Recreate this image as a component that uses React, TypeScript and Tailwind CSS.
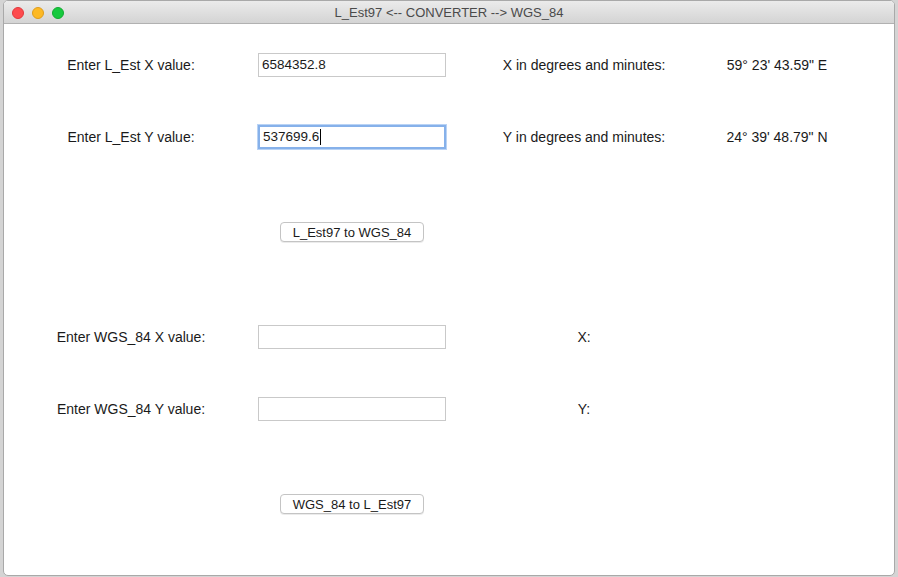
import React from 'react';

const font = { fontFamily: '"Liberation Sans", Arial, sans-serif' };

function Field({ value, focused }: { value?: string; focused?: boolean }) {
  return (
    <div
      className={`w-[188px] h-[24px] flex items-center px-[3px] text-[13.5px] text-[#1a1a1a] bg-white ${
        focused ? 'border-[2px] border-[#86b1ea] shadow-[0_0_0_1px_#b9d3f5]' : 'border border-[#c9c9c9]'
      }`}
    >
      <span>{value}</span>
      {focused && <span className="w-px h-[16px] bg-black ml-px" />}
    </div>
  );
}

function Row({ label, value, focused, right, result }: { label: string; value?: string; focused?: boolean; right: string; result?: string }) {
  return (
    <div className="flex items-center h-[24px]">
      <div className="w-[254px] text-center text-[14px] text-[#1a1a1a]">{label}</div>
      <Field value={value} focused={focused} />
      <div className="w-[276px] text-center text-[14px] text-[#1a1a1a]">{right}</div>
      <div className="w-[110px] text-center text-[14px] text-[#1a1a1a]">{result}</div>
    </div>
  );
}

function Btn({ children }: { children: React.ReactNode }) {
  return (
    <div className="flex pl-[276px]">
      <button className="w-[144px] h-[20px] bg-white border border-[#c4c4c4] rounded-[4px] shadow-[0_1px_0_rgba(0,0,0,0.08)] text-[13px] text-[#1a1a1a] leading-none">
        {children}
      </button>
    </div>
  );
}

export default function App() {
  return (
    <div className="w-[898px] h-[577px] bg-[#d4d4d4] pl-[3px] pr-[3px] overflow-hidden" style={font}>
      <div className="w-[892px] h-[576px] bg-white rounded-[5px] border border-[#a9a9a9] overflow-hidden flex flex-col">
        {/* title bar */}
        <div className="relative h-[23px] bg-gradient-to-b from-[#ebebeb] to-[#d4d4d4] border-b border-[#b1b1b1] flex items-center justify-center">
          <div className="absolute left-[8px] top-[6px] flex gap-[8px]">
            <span className="w-[12px] h-[12px] rounded-full bg-[#fd4b4e] border border-[#e2383c]" />
            <span className="w-[12px] h-[12px] rounded-full bg-[#fdb925] border border-[#de9d1c]" />
            <span className="w-[12px] h-[12px] rounded-full bg-[#16c93e] border border-[#12ab30]" />
          </div>
          <span className="text-[13px] text-[#4a4a4a] pt-[2px]">L_Est97 &lt;-- CONVERTER --&gt; WGS_84</span>
        </div>

        <div className="flex flex-col pt-[29px]">
          <Row label="Enter L_Est X value:" value="6584352.8" right="X in degrees and minutes:" result={'59° 23\' 43.59" E'} />
          <div className="h-[48px]" />
          <Row label="Enter L_Est Y value:" value="537699.6" focused right="Y in degrees and minutes:" result={'24° 39\' 48.79" N'} />
          <div className="h-[73px]" />
          <Btn>L_Est97 to WGS_84</Btn>
          <div className="h-[83px]" />
          <Row label="Enter WGS_84 X value:" right="X:" />
          <div className="h-[48px]" />
          <Row label="Enter WGS_84 Y value:" right="Y:" />
          <div className="h-[73px]" />
          <Btn>WGS_84 to L_Est97</Btn>
        </div>
      </div>
    </div>
  );
}
